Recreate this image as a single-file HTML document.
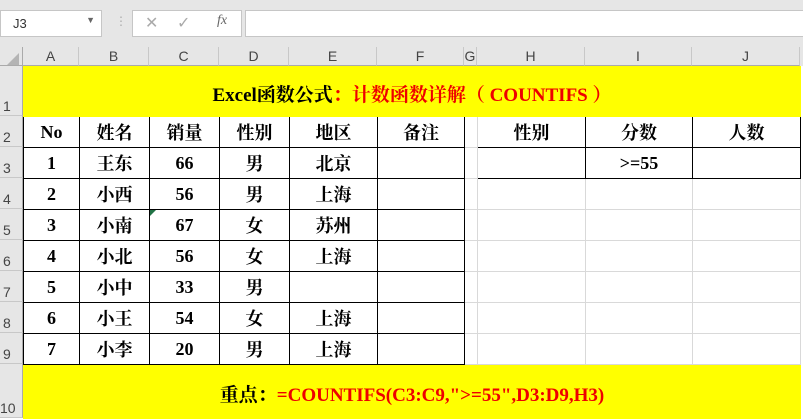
<!DOCTYPE html>
<html><head><meta charset="utf-8"><style>
*{margin:0;padding:0;box-sizing:border-box}
body{width:803px;height:418px;overflow:hidden;background:#fff;font-family:"Liberation Serif","Noto Serif CJK SC",serif;position:relative}
.top{position:absolute;left:0;top:0;width:803px;height:47px;background:#e6e6e6}
.box{position:absolute;background:#fff;border:1px solid #c6c6c6}
.ch{position:absolute;top:47px;height:19px;background:#e6e6e6;border-right:1px solid #c8c8c8;border-bottom:1px solid #aaa;font-family:"Liberation Sans",sans-serif;font-size:14px;color:#444;text-align:center;line-height:19px}
.rh{position:absolute;left:0;width:23px;background:#e6e6e6;border-bottom:1px solid #c8c8c8;border-right:1px solid #aaa;font-family:"Liberation Sans",sans-serif;font-size:14px;color:#444;padding-left:3px}
table{position:absolute;left:23px;top:66px;border-collapse:collapse;table-layout:fixed}
td{border:1px solid #d9d9d9;text-align:center;font-weight:bold;font-size:18px;padding:0;overflow:hidden;white-space:nowrap}
.y{background:#ff0;border-color:#ff0;font-size:19px;padding-top:4px}
.b{border:1px solid #000}
.r{color:#e00}
</style></head><body>
<div class="top"></div>
<div class="box" style="left:0;top:10px;width:102px;height:27px;font-family:'Liberation Sans',sans-serif;font-size:13px;color:#333;padding:5px 0 0 12px">J3<span style="position:absolute;right:6px;top:4px;font-size:9px;color:#666">▼</span></div>
<div style="position:absolute;left:115px;top:14px;color:#aaa;font-size:12px;font-family:'Liberation Sans'">⋮</div>
<div class="box" style="left:132px;top:10px;width:110px;height:27px;color:#aaa;font-family:'Liberation Sans';font-size:16px"><span style="position:absolute;left:12px;top:2px">✕</span><span style="position:absolute;left:44px;top:2px">✓</span><span style="position:absolute;left:84px;top:2px;font-style:italic;font-family:'Liberation Serif';font-size:14px;color:#666">fx</span></div>
<div class="box" style="left:245px;top:10px;width:560px;height:27px"></div>
<div class="ch" style="left:0;width:23px;border-right:1px solid #aaa"><span style="position:absolute;left:7px;top:6px;width:0;height:0;border-left:12px solid transparent;border-bottom:12px solid #b4b4b4"></span></div>
<div class="ch" style="left:23px;width:56px">A</div>
<div class="ch" style="left:79px;width:70px">B</div>
<div class="ch" style="left:149px;width:70px">C</div>
<div class="ch" style="left:219px;width:70px">D</div>
<div class="ch" style="left:289px;width:88px">E</div>
<div class="ch" style="left:377px;width:87px">F</div>
<div class="ch" style="left:464px;width:13px">G</div>
<div class="ch" style="left:477px;width:108px">H</div>
<div class="ch" style="left:585px;width:107px">I</div>
<div class="ch" style="left:692px;width:108px">J</div>
<div class="ch" style="left:800px;width:3px;border:0"></div>
<div class="rh" style="top:66px;height:50px;padding-top:32px">1</div>
<div class="rh" style="top:116px;height:31px;padding-top:13px">2</div>
<div class="rh" style="top:147px;height:31px;padding-top:13px">3</div>
<div class="rh" style="top:178px;height:31px;padding-top:13px">4</div>
<div class="rh" style="top:209px;height:31px;padding-top:13px">5</div>
<div class="rh" style="top:240px;height:31px;padding-top:13px">6</div>
<div class="rh" style="top:271px;height:31px;padding-top:13px">7</div>
<div class="rh" style="top:302px;height:31px;padding-top:13px">8</div>
<div class="rh" style="top:333px;height:31px;padding-top:13px">9</div>
<div class="rh" style="top:364px;height:54px;padding-top:36px;padding-left:0">10</div>
<table>
<colgroup><col style="width:56px"><col style="width:70px"><col style="width:70px"><col style="width:70px"><col style="width:88px"><col style="width:87px"><col style="width:13px"><col style="width:108px"><col style="width:107px"><col style="width:108px"></colgroup>
<tr style="height:50px"><td colspan="10" class="y">Excel函数公式<span class="r">：计数函数详解（ COUNTIFS ）</span></td></tr>
<tr style="height:31px"><td class="b">No</td><td class="b">姓名</td><td class="b">销量</td><td class="b">性别</td><td class="b">地区</td><td class="b">备注</td><td></td><td class="b">性别</td><td class="b">分数</td><td class="b">人数</td></tr>
<tr style="height:31px"><td class="b">1</td><td class="b">王东</td><td class="b">66</td><td class="b">男</td><td class="b">北京</td><td class="b"></td><td></td><td class="b"></td><td class="b">&gt;=55</td><td class="b"></td></tr>
<tr style="height:31px"><td class="b">2</td><td class="b">小西</td><td class="b">56</td><td class="b">男</td><td class="b">上海</td><td class="b"></td><td></td><td></td><td></td><td></td></tr>
<tr style="height:31px"><td class="b">3</td><td class="b">小南</td><td class="b" style="position:relative">67<span style="position:absolute;left:0;top:0;width:0;height:0;border-top:6px solid #217346;border-right:6px solid transparent"></span></td><td class="b">女</td><td class="b">苏州</td><td class="b"></td><td></td><td></td><td></td><td></td></tr>
<tr style="height:31px"><td class="b">4</td><td class="b">小北</td><td class="b">56</td><td class="b">女</td><td class="b">上海</td><td class="b"></td><td></td><td></td><td></td><td></td></tr>
<tr style="height:31px"><td class="b">5</td><td class="b">小中</td><td class="b">33</td><td class="b">男</td><td class="b"></td><td class="b"></td><td></td><td></td><td></td><td></td></tr>
<tr style="height:31px"><td class="b">6</td><td class="b">小王</td><td class="b">54</td><td class="b">女</td><td class="b">上海</td><td class="b"></td><td></td><td></td><td></td><td></td></tr>
<tr style="height:31px"><td class="b">7</td><td class="b">小李</td><td class="b">20</td><td class="b">男</td><td class="b">上海</td><td class="b"></td><td></td><td></td><td></td><td></td></tr>
<tr style="height:54px"><td colspan="10" class="y">重点：<span class="r">=COUNTIFS(C3:C9,"&gt;=55",D3:D9,H3)</span></td></tr>
</table>
</body></html>
